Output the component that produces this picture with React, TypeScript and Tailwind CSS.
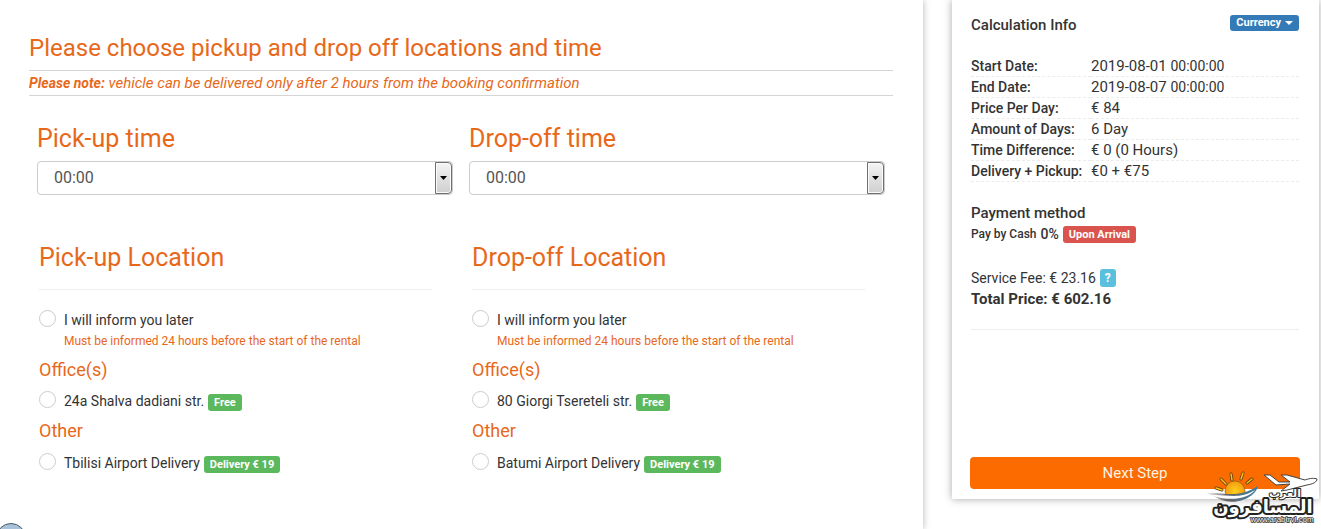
import { useState } from "react";

const orange = "text-[#e8681a]";

const details = [
  { label: "Start Date:", value: "2019-08-01", time: "00:00:00" },
  { label: "End Date:", value: "2019-08-07", time: "00:00:00" },
  { label: "Price Per Day:", value: "€ 84" },
  { label: "Amount of Days:", value: "6 Day" },
  { label: "Time Difference:", value: "€ 0 (0 Hours)" },
  { label: "Delivery + Pickup:", value: "€0 + €75" },
];

const hours = Array.from({ length: 24 }, (_, i) => `${String(i).padStart(2, "0")}:00`);

function TimeSelect({ id, label }: { id: string; label: string }) {
  const [time, setTime] = useState("00:00");

  return (
    <div>
      <label htmlFor={id} className={`block text-[25px] leading-7 ${orange}`}>
        {label}
      </label>
      <div className="relative mt-2">
        <select
          id={id}
          value={time}
          onChange={(e) => setTime(e.target.value)}
          className="block h-[34px] w-full appearance-none rounded border border-[#ccc] bg-white px-4 text-base text-[#555]"
        >
          {hours.map((hour) => (
            <option key={hour}>{hour}</option>
          ))}
        </select>
        <span className="pointer-events-none absolute inset-y-px right-px flex w-[17px] items-center justify-center rounded-r-sm border border-[#707070] bg-linear-to-b from-[#f4f4f4] to-[#cfcfcf] shadow-[inset_0_0_0_1px_#fafafa]">
          <svg width="7" height="4" viewBox="0 0 7 4" aria-hidden="true">
            <path d="M0 0h7L3.5 4z" fill="#000" />
          </svg>
        </span>
      </div>
    </div>
  );
}

function Option({
  name,
  label,
  badge,
  value,
  onChange,
}: {
  name: string;
  label: string;
  badge?: string;
  value: string;
  onChange: (v: string) => void;
}) {
  return (
    <label className="flex h-5 items-start text-[#333]">
      <input
        type="radio"
        name={name}
        checked={value === label}
        onChange={() => onChange(label)}
        className="mr-2 size-[17px] shrink-0 appearance-none rounded-full border border-[#ccc] bg-white checked:border-[5px] checked:border-[#e8681a]"
      />
      <span className="text-sm leading-5">{label}</span>
      {badge && (
        <span className="mt-[3px] ml-1 rounded-[3px] bg-[#5cb85c] px-[6px] text-[11px] leading-[17px] font-bold text-white">
          {badge}
        </span>
      )}
    </label>
  );
}

function LocationPicker({
  name,
  title,
  office,
  other,
}: {
  name: string;
  title: string;
  office: string;
  other: string;
}) {
  const [value, setValue] = useState("");

  return (
    <fieldset>
      <legend className={`text-[25px] leading-7 ${orange}`}>{title}</legend>
      <hr className="mt-[17px] mb-5 border-[#eee]" />
      <Option name={name} label="I will inform you later" value={value} onChange={setValue} />
      <p className={`mt-[3px] ml-[25px] text-xs leading-4 ${orange}`}>
        Must be informed 24 hours before the start of the rental
      </p>
      <h4 className={`mt-[11px] text-lg leading-5 ${orange}`}>Office(s)</h4>
      <div className="mt-[11px]">
        <Option name={name} label={office} badge="Free" value={value} onChange={setValue} />
      </div>
      <h4 className={`mt-[10px] text-lg leading-5 ${orange}`}>Other</h4>
      <div className="mt-3">
        <Option name={name} label={other} badge="Delivery € 19" value={value} onChange={setValue} />
      </div>
    </fieldset>
  );
}

function Watermark() {
  return (
    <svg
      width="114"
      height="58"
      viewBox="0 0 114 58"
      className="pointer-events-none absolute right-[2px] bottom-0"
      role="img"
      aria-label="arabtrvl"
    >
      <defs>
        <linearGradient id="wave" x1="0" x2="1">
          <stop offset="0" stopColor="#888" stopOpacity="0" />
          <stop offset="0.4" stopColor="#666" />
          <stop offset="1" stopColor="#3f7fa3" />
        </linearGradient>
        <radialGradient id="sun">
          <stop offset="0" stopColor="#ffd21f" />
          <stop offset="1" stopColor="#f59a10" />
        </radialGradient>
      </defs>
      <g stroke="#5b3d10" strokeWidth="3" strokeLinecap="round">
        <path d="M11 17l6 2M16 8l5 5M26 3l1 6M38 2l-2 6M47 8l-5 4" />
      </g>
      <g stroke="#ffc21a" strokeWidth="1.5" strokeLinecap="round">
        <path d="M11 17l6 2M16 8l5 5M26 3l1 6M38 2l-2 6M47 8l-5 4" />
      </g>
      <circle cx="30" cy="20" r="10" fill="url(#sun)" stroke="#7a5010" strokeWidth="0.6" />
      <path d="M0 22C18 20 30 29 53 15C50 28 28 35 14 28Q8 24 0 22z" fill="url(#wave)" />
      <path d="M6 24C22 23 34 29 50 19C43 28 24 31 6 24z" fill="#fff" />
      <path
        d="M59 4l6 0 9 7 11 0 -9 -7 6 0 18 5c5 -2 10 -2 12 -1c0 3 -4 5 -10 6l-20 5 -6 1 9 -7 -14 1z"
        fill="#fff"
        stroke="#444"
        strokeWidth="1"
      />
      <g
        fill="#fff"
        stroke="#222"
        strokeLinejoin="round"
        paintOrder="stroke"
        fontFamily="'DejaVu Sans', sans-serif"
        fontWeight="bold"
        textAnchor="middle"
        direction="rtl"
      >
        <text x="58" y="42" fontSize="18" strokeWidth="4">
          المسافرون
        </text>
        <text x="80" y="26" fontSize="11" strokeWidth="2">
          العرب
        </text>
      </g>
      <text
        x="77"
        y="51"
        fontSize="8"
        fill="#fff"
        stroke="#333"
        strokeWidth="1.5"
        paintOrder="stroke"
        fontFamily="'Liberation Sans', sans-serif"
        textAnchor="middle"
      >
        www.arabtrvl.com
      </text>
    </svg>
  );
}

export default function App() {
  return (
    <div className="relative flex min-h-screen items-start overflow-hidden bg-white pr-[2px] font-['Roboto',sans-serif] text-[#333]">
      <main className="min-h-screen flex-1 pt-[34px] pr-[30px] pl-[29px] shadow-[0_0_7px_rgba(0,0,0,0.3)]">
        <h1 className={`text-2xl leading-7 ${orange}`}>
          Please choose pickup and drop off locations and time
        </h1>
        <p className={`mt-2 border-y border-[#d5d5d5] text-[15px] leading-6 italic ${orange}`}>
          <strong className="text-sm leading-6">Please note:</strong> vehicle can be delivered only
          after 2 hours from the booking confirmation
        </p>

        <div className="mt-[29px] grid grid-cols-2 gap-4 px-2">
          <TimeSelect id="pickup-time" label="Pick-up time" />
          <TimeSelect id="dropoff-time" label="Drop-off time" />
        </div>

        <div className="mt-[49px] grid grid-cols-2 gap-10 pr-7 pl-[10px]">
          <LocationPicker
            name="pickup"
            title="Pick-up Location"
            office="24a Shalva dadiani str."
            other="Tbilisi Airport Delivery"
          />
          <LocationPicker
            name="dropoff"
            title="Drop-off Location"
            office="80 Giorgi Tsereteli str."
            other="Batumi Airport Delivery"
          />
        </div>
      </main>

      <aside className="ml-[29px] w-[367px] shrink-0 pt-[15px] pr-[19px] pb-[10px] pl-[18px] shadow-[0_0_8px_rgba(0,0,0,0.35)]">
        <div className="px-px">
          <div className="flex items-start justify-between">
            <h2 className="text-[15px] leading-5 font-medium">Calculation Info</h2>
            <button
              type="button"
              className="flex h-4 items-center gap-1 rounded-[3px] bg-[#337ab7] px-[6px] text-[11px] leading-4 font-bold text-white"
            >
              Currency
              <svg width="8" height="4" viewBox="0 0 8 4" aria-hidden="true">
                <path d="M0 0h8L4 4z" fill="#fff" />
              </svg>
            </button>
          </div>

          <table className="mt-[21px] w-full text-sm leading-5">
            <tbody>
              {details.map((row) => (
                <tr key={row.label} className="border-b border-dashed border-[#ececec]">
                  <th scope="row" className="w-[120px] text-left font-medium whitespace-nowrap">
                    {row.label}
                  </th>
                  <td className="text-[15px] leading-5">
                    {row.value}{" "}
                    {row.time && <span className="text-sm leading-none">{row.time}</span>}
                  </td>
                </tr>
              ))}
            </tbody>
          </table>

          <h3 className="mt-[21px] text-[15px] leading-5 font-medium">Payment method</h3>
          <p className="flex items-center text-sm leading-[22px] font-medium">
            <span className="mr-1 text-xs">Pay by Cash</span> 0%
            <span className="ml-1 rounded-[3px] bg-[#d9534f] px-[6px] text-[11px] leading-[17px] font-bold text-white">
              Upon Arrival
            </span>
          </p>

          <p className="mt-[22px] flex items-center text-sm leading-[22px]">
            Service Fee: € 23.16
            <button
              type="button"
              aria-label="About the service fee"
              className="ml-1 h-[18px] w-4 rounded-[3px] bg-[#5bc0de] text-xs leading-[18px] font-bold text-white"
            >
              ?
            </button>
          </p>
          <p className="text-[15px] leading-5 font-bold">Total Price: € 602.16</p>
          <hr className="mt-5 border-[#eee]" />
        </div>

        <button
          type="button"
          className="mt-[127px] block h-8 w-full rounded bg-[#fb6b00] text-[15px] text-[#fff2e0]"
        >
          Next Step
        </button>
      </aside>

      <Watermark />

      {/* Round chat launcher that peeks in from below */}
      <span className="absolute -bottom-6 -left-1 size-[30px] rounded-full border border-[#4a5a68] bg-[#a9c4da]" />
    </div>
  );
}
